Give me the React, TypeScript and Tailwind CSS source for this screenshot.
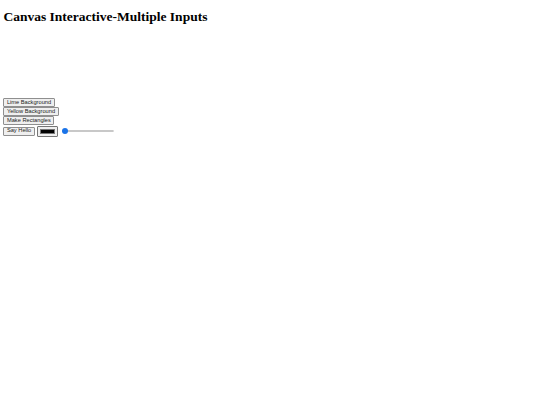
import React from "react";

function Btn({ children }: { children: React.ReactNode }) {
  return (
    <button className="h-[8.9px] px-[2.5px] bg-[#efefef] border-[0.5px] border-[#8f8f8f] rounded-[1px] text-[5.7px] leading-none text-[#222] font-['Liberation_Sans',Arial,sans-serif] flex items-center">
      {children}
    </button>
  );
}

export default function App() {
  return (
    <div className="min-h-[405px] w-[540px] bg-white px-[3.4px] font-['Liberation_Serif','Times_New_Roman',serif] text-black">
      <h1 className="pt-[9.3px] text-[13.5px] font-bold leading-[15.5px]">
        Canvas Interactive-Multiple Inputs
      </h1>
      <div className="h-[73.6px] w-[127px] bg-white" />
      <div className="flex flex-col items-start">
        <Btn>Lime Background</Btn>
        <Btn>Yellow Background</Btn>
        <Btn>Make Rectangles</Btn>
        <div className="flex items-center gap-[2.6px] pt-[0.5px]">
          <Btn>Say Hello</Btn>
          <div className="h-[11.4px] w-[21px] bg-[#efefef] border-[0.5px] border-[#767676] rounded-[1px] p-[2px] flex">
            <div className="flex-1 bg-black border-[0.4px] border-[#777]" />
          </div>
          <div className="relative w-[52px] h-[7px] flex items-center ml-[1px]">
            <div className="w-full h-[2px] rounded-full bg-[#e6e6e6] border-[0.4px] border-[#c8c8c8]" />
            <div className="absolute left-0 top-[0.5px] h-[6px] w-[6px] rounded-full bg-[#1a73e8]" />
          </div>
        </div>
      </div>
    </div>
  );
}
